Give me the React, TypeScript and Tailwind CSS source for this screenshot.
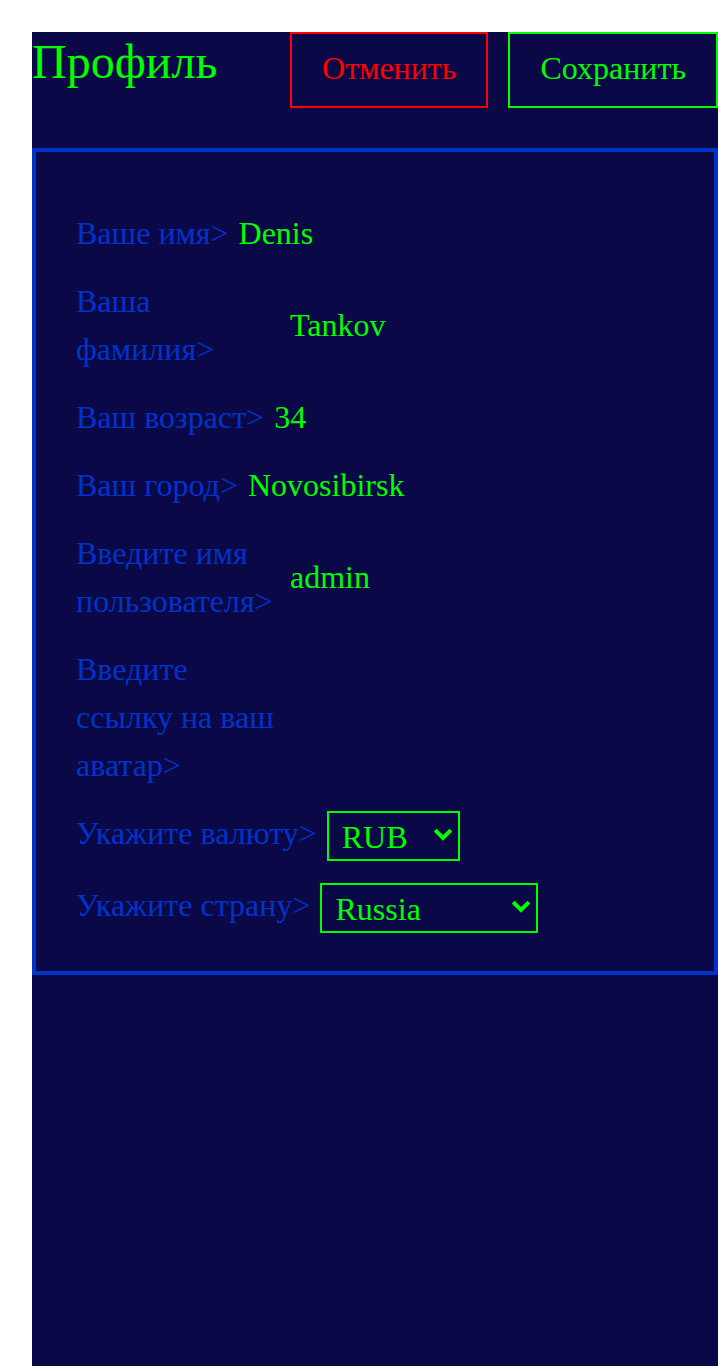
const fields = [
  { label: "Ваше имя>", value: "Denis" },
  { label: "Ваша фамилия>", value: "Tankov" },
  { label: "Ваш возраст>", value: "34" },
  { label: "Ваш город>", value: "Novosibirsk" },
  { label: "Введите имя пользователя>", value: "admin" },
  { label: "Введите ссылку на ваш аватар>", value: "" },
];

function Chevron() {
  return (
    <svg
      width="18"
      height="12"
      viewBox="0 0 18 12"
      className="pointer-events-none absolute right-[8px] top-[18px]"
    >
      <path d="M2.5 2.5 L9 9 L15.5 2.5" fill="none" stroke="#00ff00" strokeWidth="4" strokeLinecap="square" />
    </svg>
  );
}

function Select({ options, width }: { options: string[]; width: string }) {
  return (
    <div className={`relative mt-[2px] ${width}`}>
      <select
        defaultValue={options[0]}
        className="h-[50px] w-full appearance-none border-2 border-[#00ff00] bg-transparent pb-[4px] pl-[13px] text-[#00ff00] outline-none"
      >
        {options.map((o) => (
          <option key={o} className="bg-[#0a0846]">
            {o}
          </option>
        ))}
      </select>
      <Chevron />
    </div>
  );
}

export default function App() {
  return (
    <div className="bg-white pl-[32px] pt-[32px] font-['Liberation_Serif',serif]">
      <div className="w-[686px] min-h-[1334px] bg-[#0a0846]">
        <header className="flex items-start justify-between">
          <h1 className="pt-[3px] text-[48px] leading-[53px] text-[#00ff00]">Профиль</h1>
          <div className="flex gap-[20px]">
            <button className="flex h-[76px] items-center border-2 border-[#ff0000] px-[30px] pb-[5px] text-[32px] text-[#ff0000]">
              Отменить
            </button>
            <button className="flex h-[76px] items-center border-2 border-[#00ff00] px-[30px] pb-[5px] text-[32px] text-[#00ff00]">
              Сохранить
            </button>
          </div>
        </header>

        <form className="mt-[40px] flex flex-col gap-[20px] border-4 border-[#0033cc] px-[40px] pb-[38px] pt-[57px] text-[32px] leading-[48px]">
          {fields.map((f) => (
            <div key={f.label} className="flex items-center gap-[10px]">
              <span className="max-w-[204px] text-[#0033cc]">{f.label}</span>
              <span className="text-[#00ff00]">{f.value}</span>
            </div>
          ))}
          <div className="flex items-start gap-[10px]">
            <span className="text-[#0033cc]">Укажите валюту&gt;</span>
            <Select options={["RUB", "USD", "EUR"]} width="w-[133px]" />
          </div>
          <div className="flex items-start gap-[10px]">
            <span className="text-[#0033cc]">Укажите страну&gt;</span>
            <Select options={["Russia", "Kazakhstan", "Belarus"]} width="w-[218px]" />
          </div>
        </form>
      </div>
    </div>
  );
}
